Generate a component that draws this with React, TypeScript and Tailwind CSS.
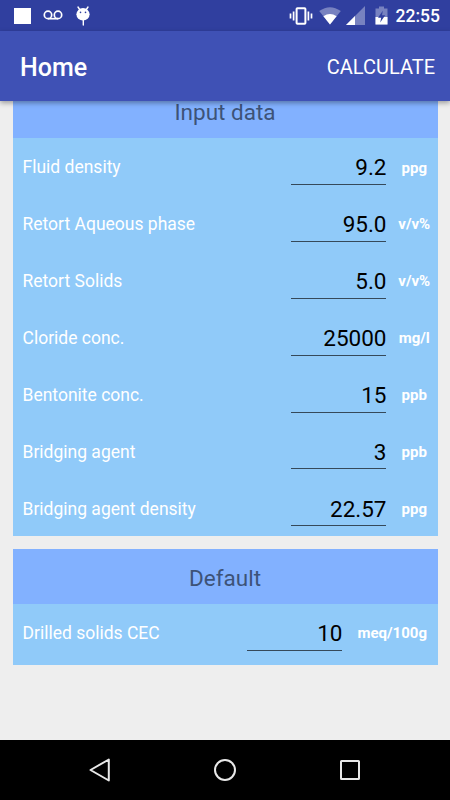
import clsx from "clsx";

type Field = {
  label: string;
  value: string;
  unit: string;
  wideUnit?: boolean;
};

const inputFields: Field[] = [
  { label: "Fluid density", value: "9.2", unit: "ppg" },
  { label: "Retort Aqueous phase", value: "95.0", unit: "v/v%" },
  { label: "Retort Solids", value: "5.0", unit: "v/v%" },
  { label: "Cloride conc.", value: "25000", unit: "mg/l" },
  { label: "Bentonite conc.", value: "15", unit: "ppb" },
  { label: "Bridging agent", value: "3", unit: "ppb" },
  { label: "Bridging agent density", value: "22.57", unit: "ppg" },
];

const defaultFields: Field[] = [
  { label: "Drilled solids CEC", value: "10", unit: "meq/100g", wideUnit: true },
];

function StatusBar() {
  return (
    <div className="flex h-[31px] shrink-0 items-center justify-between bg-[#303f9f] pl-3.5 pr-2.5 text-white">
      <div className="flex items-center">
        <div className="mr-3 h-4 w-[17px] bg-white" />
        <svg width="20" height="12" viewBox="0 0 20 12" fill="none" stroke="currentColor" strokeWidth="1.7">
          <circle cx="5" cy="4.9" r="3.7" />
          <circle cx="15" cy="4.9" r="3.7" />
          <path d="M5 8.7h10" />
        </svg>
        <svg className="ml-3" width="16" height="22" viewBox="0 0 16 22">
          <path d="M3 2l2 3M13 2l-2 3M8.3 14v6" stroke="currentColor" strokeWidth="1.4" strokeLinecap="round" />
          <ellipse cx="8" cy="9.3" rx="6.6" ry="6.2" fill="currentColor" />
          <circle cx="5.5" cy="7.4" r="0.8" fill="#303f9f" />
          <circle cx="10.5" cy="7.4" r="0.8" fill="#303f9f" />
        </svg>
      </div>
      <div className="flex items-center">
        <svg width="24" height="18" viewBox="0 0 24 18" fill="none" stroke="currentColor" strokeWidth="1.7">
          <rect x="7.6" y="1.3" width="8.8" height="15.4" rx="0.8" strokeWidth="2" />
          <path d="M4.6 4.5v9M1.5 6.5v5M19.4 4.5v9M22.5 6.5v5" />
        </svg>
        <svg className="ml-[6px]" width="22" height="18" viewBox="0 0 22 18" fill="currentColor">
          <path d="M11 17.5L0.2 4Q11-3.6 21.8 4z" opacity="0.35" />
          <path d="M11 17.5L4.4 9.2Q11 4.6 17.6 9.2z" />
        </svg>
        <svg className="ml-[5px]" width="19" height="19" viewBox="0 0 19 19" fill="currentColor">
          <path d="M0 19L19 0v19z" opacity="0.35" />
          <path d="M0 19l9-9v9z" />
        </svg>
        <svg className="ml-2.5" width="13" height="19" viewBox="0 0 13 19" fill="currentColor">
          <path d="M0.5 2.5H4V0.5h5v2h3.5V18.5h-12z" opacity="0.35" />
          <path d="M0.5 11h12v7.5h-12z" />
          <path d="M7.8 4.8L3 11.8h3.2L5.2 16.5l5-7.2H7z" fill="#303f9f" />
        </svg>
        <span className="ml-2 pt-0.5 text-[17.5px] leading-none font-medium">22:55</span>
      </div>
    </div>
  );
}

function FieldRow({ field }: { field: Field }) {
  return (
    <div className="flex h-[56.875px] items-start pl-2.5">
      <div className="flex-1 pt-[18.25px] text-[17.5px] leading-[22px] text-white">{field.label}</div>
      <div className="h-[47px] w-[95px] border-b border-[#35495a] pt-[15.25px] text-right text-[22.5px] leading-7 text-black">
        <span className="-mr-[0.5px]">{field.value}</span>
      </div>
      <div
        className={clsx(
          "flex justify-center text-[15px] leading-5 font-bold whitespace-nowrap text-white",
          field.wideUnit ? "w-[95.5px] pl-[5px] pt-[19.5px]" : "w-[51.5px] pl-[5px] pt-[19.5px]"
        )}
      >
        {field.unit}
      </div>
    </div>
  );
}

function Card({ title, fields, className }: { title: string; fields: Field[]; className?: string }) {
  return (
    <div className={clsx("mx-[12.5px] bg-[#90caf9]", className)}>
      <div className="flex h-[55px] items-center justify-center bg-[#82b1ff] pt-[3px] text-[22.5px] leading-5 text-[#3d5378]">
        {title}
      </div>
      {fields.map((field) => (
        <FieldRow key={field.label} field={field} />
      ))}
    </div>
  );
}

function NavigationBar() {
  return (
    <div className="flex h-[60px] shrink-0 items-center justify-center gap-[101px] bg-black text-[#e8e8e8]">
      <svg width="24" height="24" viewBox="0 0 24 24" fill="none" stroke="currentColor" strokeWidth="2" strokeLinejoin="round">
        <path d="M20.8 1.5v21L2.5 12z" />
      </svg>
      <svg width="24" height="24" viewBox="0 0 24 24" fill="none" stroke="currentColor" strokeWidth="2">
        <circle cx="12" cy="12" r="10" />
      </svg>
      <svg width="24" height="24" viewBox="0 0 24 24" fill="none" stroke="currentColor" strokeWidth="2">
        <rect x="3" y="3" width="18" height="18" rx="0.5" />
      </svg>
    </div>
  );
}

export default function App() {
  return (
    <div className="flex h-[800px] w-[450px] flex-col overflow-hidden bg-[#eeeeee] font-[Roboto,sans-serif]">
      <StatusBar />
      <header className="z-10 flex h-[70px] shrink-0 items-center justify-between bg-[#3f51b5] pl-5 pr-[15px] text-white shadow-[0_2px_5px_rgba(0,0,0,0.35)]">
        <h1 className="pt-1 text-[25px] font-medium">Home</h1>
        <button className="pt-0.5 text-[20px]">CALCULATE</button>
      </header>
      <main className="min-h-0 flex-1 overflow-hidden">
        <Card title="Input data" fields={inputFields} className="-mt-[18px]" />
        <Card title="Default" fields={defaultFields} className="mt-[12.5px] pb-1" />
      </main>
      <NavigationBar />
    </div>
  );
}
